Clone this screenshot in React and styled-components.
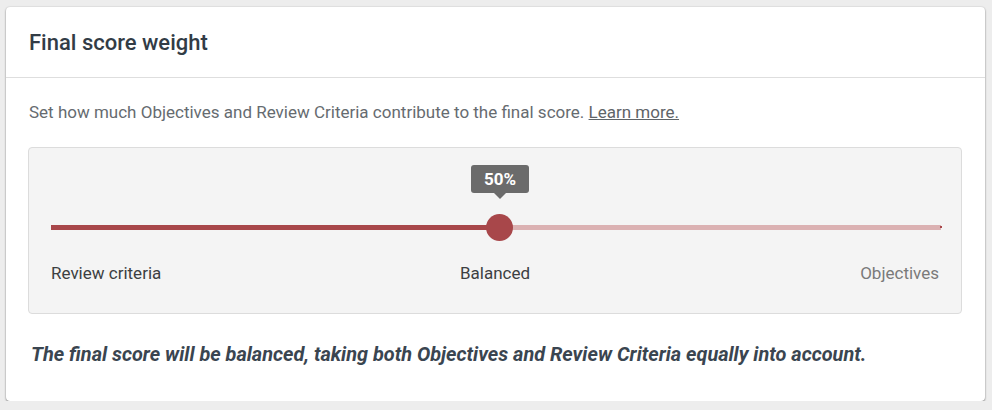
import React from 'react';
import styled, { createGlobalStyle } from 'styled-components';

const GlobalStyle = createGlobalStyle`
  html, body {
    margin: 0;
    background: #ededed;
    font-family: Roboto, "Liberation Sans", Arial, sans-serif;
  }
  body {
    padding: 7px 7px 0 6px;
  }
`;

const Card = styled.section`
  width: 979px;
  background: #fff;
  border-radius: 4px;
  box-shadow: 0 1px 2px rgba(0, 0, 0, 0.45), 0 0 2px rgba(0, 0, 0, 0.12);
`;

const Header = styled.header`
  height: 71px;
  display: flex;
  align-items: center;
  padding: 0 23px;
  border-bottom: 1px solid #dedede;
  box-sizing: border-box;
`;

const Title = styled.h2`
  margin: 0;
  font-size: 22px;
  font-weight: 500;
  color: #323c46;
`;

const Body = styled.div`
  padding: 24px 23px 34px 22px;
`;

const Description = styled.p`
  margin: 0 0 25px 1px;
  font-size: 17px;
  line-height: 20px;
  color: #666b70;

  a {
    color: #5f6468;
    text-decoration: underline;
  }
`;

const Panel = styled.div`
  background: #f4f4f4;
  border: 1px solid #dcdcdc;
  border-radius: 4px;
  padding: 17px 20px 30px 22px;
`;

const SliderWrap = styled.div`
  position: relative;
  height: 78px;
`;

const Track = styled.div`
  position: absolute;
  left: 0;
  right: 0;
  top: 60px;
  height: 5px;
  background: #dbb1b2;
  &::after {
    content: '';
    position: absolute;
    right: -1px;
    top: 1px;
    width: 2px;
    height: 2px;
    background: #a8474a;
  }
`;

const Fill = styled.div`
  height: 100%;
  background: #a8474a;
`;

const Thumb = styled.div`
  position: absolute;
  top: 49px;
  width: 27px;
  height: 27px;
  margin-left: -10px;
  border-radius: 50%;
  background: #a8474a;
`;

const Bubble = styled.div`
  position: absolute;
  top: 0;
  transform: translateX(-25px);
  width: 58px;
  height: 28px;
  border-radius: 3px;
  background: #6b6b6b;
  color: #fff;
  font-size: 17px;
  font-weight: 700;
  display: flex;
  align-items: center;
  justify-content: center;
  &::after {
    content: '';
    position: absolute;
    left: 50%;
    bottom: -6px;
    margin-left: -6px;
    border-left: 6px solid transparent;
    border-right: 6px solid transparent;
    border-top: 6px solid #6b6b6b;
  }
`;

const Labels = styled.div`
  display: grid;
  grid-template-columns: 1fr auto 1fr;
  margin-top: 20px;
  padding-right: 2px;
  font-size: 17px;
  line-height: 20px;
`;

const Label = styled.span`
  justify-self: ${({ align }) => align || 'center'};
  color: ${({ muted }) => (muted ? '#7a7a7a' : '#3c3f42')};
`;

const Summary = styled.p`
  margin: 29px 0 0 3px;
  font-size: 19.9px;
  line-height: 24px;
  font-weight: 700;
  font-style: italic;
  color: #3a4550;
`;

export default function App() {
  const value = 50;
  return (
    <>
      <GlobalStyle />
      <Card>
        <Header>
          <Title>Final score weight</Title>
        </Header>
        <Body>
          <Description>
            Set how much Objectives and Review Criteria contribute to the final score.{' '}
            <a href="#">Learn more.</a>
          </Description>
          <Panel>
            <SliderWrap>
              <Track>
                <Fill style={{ width: `${value}%` }} />
              </Track>
              <Bubble style={{ left: `${value}%` }}>{value}%</Bubble>
              <Thumb style={{ left: `${value}%` }} />
            </SliderWrap>
            <Labels>
              <Label align="start">Review criteria</Label>
              <Label>Balanced</Label>
              <Label align="end" muted>
                Objectives
              </Label>
            </Labels>
          </Panel>
          <Summary>
            The final score will be balanced, taking both Objectives and Review Criteria equally into account.
          </Summary>
        </Body>
      </Card>
    </>
  );
}
